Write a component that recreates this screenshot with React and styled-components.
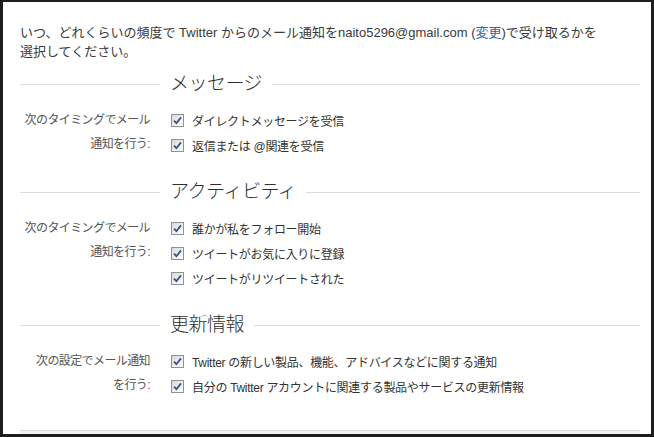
import React from 'react';
import styled, { createGlobalStyle } from 'styled-components';

const GlobalStyle = createGlobalStyle`
  html, body {
    margin: 0;
    padding: 0;
    background: #ffffff;
  }
  body {
    font-family: "Liberation Sans", "Noto Sans CJK JP", sans-serif;
  }
`;

const Frame = styled.div`
  width: 654px;
  height: 437px;
  box-sizing: border-box;
  border: 3px solid #1e1e1e;
  border-top-width: 2px;
  background: #ffffff;
  overflow: hidden;
`;

const Content = styled.div`
  padding: 21px 11px 0 17px;
  display: flex;
  flex-direction: column;
`;

const Intro = styled.p`
  margin: 0 0 11px;
  font-size: 13px;
  line-height: 19px;
  color: #3a3a3a;
`;

const Link = styled.a`
  color: #2a6aa8;
  text-decoration: none;
`;

const Section = styled.section`
  margin-bottom: ${(p) => (p.last ? '31px' : '22px')};
`;

const Legend = styled.div`
  height: 24px;
  display: flex;
  align-items: center;
  gap: 10px;
`;

const Rule = styled.div`
  height: 1px;
  background: #dcdcdc;
  flex: ${(p) => (p.short ? '0 0 140px' : '1')};
`;

const LegendText = styled.h2`
  margin: 0;
  font-size: 19px;
  font-weight: 300;
  line-height: 24px;
  color: #2e2e2e;
  white-space: nowrap;
  letter-spacing: -0.5px;
`;

const Body = styled.div`
  display: flex;
  padding-top: 12px;
  gap: 21px;
`;

const Label = styled.div`
  width: 130px;
  text-align: right;
  font-size: 12px;
  line-height: 24px;
  color: #555555;
  white-space: nowrap;
  letter-spacing: -0.6px;
`;

const List = styled.ul`
  margin: 0;
  padding: 0;
  list-style: none;
`;

const Item = styled.li`
  height: 25px;
  display: flex;
  align-items: center;
  gap: 8px;
  font-size: 12px;
  color: #333333;
  letter-spacing: -0.3px;
  white-space: nowrap;
`;

const Box = styled.span`
  width: 13px;
  height: 13px;
  box-sizing: border-box;
  border: 1px solid #8f9294;
  background: linear-gradient(135deg, #d8d9da 0%, #f4f4f4 70%, #ffffff 100%);
  display: flex;
  align-items: center;
  justify-content: center;
  flex: none;
`;

const Footer = styled.div`
  height: 6px;
  border-top: 1px solid #dadada;
  background: #f2f2f2;
`;

const Check = () => (
  <Box>
    <svg width="9" height="9" viewBox="0 0 9 9">
      <path d="M1 4.6 L3.4 7.2 L8 1.4" fill="none" stroke="#3b4f8c" strokeWidth="1.8" />
    </svg>
  </Box>
);

const sections = [
  {
    title: 'メッセージ',
    label: ['次のタイミングでメール', '通知を行う:'],
    items: ['ダイレクトメッセージを受信', '返信または @関連を受信'],
  },
  {
    title: 'アクティビティ',
    label: ['次のタイミングでメール', '通知を行う:'],
    items: ['誰かが私をフォロー開始', 'ツイートがお気に入りに登録', 'ツイートがリツイートされた'],
  },
  {
    title: '更新情報',
    label: ['次の設定でメール通知', 'を行う:'],
    items: [
      'Twitter の新しい製品、機能、アドバイスなどに関する通知',
      '自分の Twitter アカウントに関連する製品やサービスの更新情報',
    ],
  },
];

const App = () => {
  return (
    <Frame>
      <GlobalStyle />
      <Content>
        <Intro>
          いつ、どれくらいの頻度で Twitter からのメール通知をnaito5296@gmail.com (<Link href="#">変更</Link>)で受け取るかを
          <br />
          選択してください。
        </Intro>
        {sections.map((s, i) => (
          <Section key={s.title} last={i === sections.length - 1}>
            <Legend>
              <Rule short />
              <LegendText>{s.title}</LegendText>
              <Rule />
            </Legend>
            <Body>
              <Label>
                {s.label[0]}
                <br />
                {s.label[1]}
              </Label>
              <List>
                {s.items.map((t) => (
                  <Item key={t}>
                    <Check />
                    {t}
                  </Item>
                ))}
              </List>
            </Body>
          </Section>
        ))}
        <Footer />
      </Content>
    </Frame>
  );
};

export default App;
